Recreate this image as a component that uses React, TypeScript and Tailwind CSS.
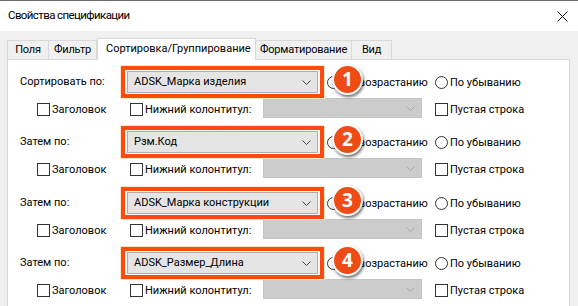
import React from 'react';

const font = { fontFamily: 'Roboto, "Noto Sans", sans-serif' };

const Chevron = ({ disabled }: { disabled?: boolean }) => (
  <svg width="9" height="5" viewBox="0 0 9 5" className="shrink-0">
    <path d="M0.5 0.5 L4.5 4.5 L8.5 0.5" fill="none" stroke={disabled ? '#a8a8a8' : '#444'} strokeWidth="1" />
  </svg>
);

const Checkbox = ({ label }: { label: string }) => (
  <div className="flex items-center gap-[2px] whitespace-nowrap">
    <div className="w-[13px] h-[13px] border border-[#333] bg-white shrink-0" />
    <span className="leading-none">{label}</span>
  </div>
);

const Radio = ({ label }: { label: string }) => (
  <div className="flex items-center gap-[2px] whitespace-nowrap">
    <div className="w-[13px] h-[13px] rounded-full border border-[#333] bg-white shrink-0" />
    <span className="leading-none">{label}</span>
  </div>
);

const Badge = ({ n }: { n: number }) => (
  <div className="absolute left-[312px] top-[-2px] w-[31px] h-[31px] rounded-full bg-[#ef4b14] border-2 border-white shadow-[1px_2px_3px_rgba(0,0,0,0.55)] flex items-center justify-center">
    <span className="text-white font-bold text-[19px] leading-none" style={{ fontFamily: '"Open Sans", "Noto Sans", sans-serif' }}>
      {n}
    </span>
  </div>
);

const sections = [
  { label: 'Сортировать по:', value: 'ADSK_Марка изделия', h: 'h-[60px]' },
  { label: 'Затем по:', value: 'Рзм.Код', h: 'h-[61px]' },
  { label: 'Затем по:', value: 'ADSK_Марка конструкции', h: 'h-[60px]' },
  { label: 'Затем по:', value: 'ADSK_Размер_Длина', h: 'h-[60px]' },
];

const tabs = [
  { t: 'Поля', w: 'w-[42px] border-l' },
  { t: 'Фильтр', w: 'w-[48px]' },
  { t: 'Сортировка/Группирование', w: 'w-[159px]' },
  { t: 'Форматирование', w: 'w-[96px]' },
  { t: 'Вид', w: 'w-[40px]' },
];

export default function App() {
  return (
    <div className="w-[578px] h-[306px] overflow-hidden bg-[#f0f0f0] text-[11px] text-black" style={font}>
      {/* Title bar */}
      <div className="h-[31px] bg-white border-t border-[#6e6e6e] flex items-center justify-between pl-[8px] pr-[10px]">
        <span className="text-[11.5px] tracking-[-0.6px] leading-none pb-[1px]">Свойства спецификации</span>
        <svg width="11" height="11" viewBox="0 0 11 11">
          <path d="M0.5 0.5 L10.5 10.5 M10.5 0.5 L0.5 10.5" stroke="#111" strokeWidth="1" />
        </svg>
      </div>

      {/* Tabs */}
      <div className="pl-[7px] pt-[6px] flex items-end h-[28px] whitespace-nowrap">
        {tabs.map((tab, i) =>
          i === 2 ? (
            <div
              key={tab.t}
              className={`${tab.w} h-[22px] -mb-[1px] bg-white border border-b-0 border-[#d9d9d9] pl-[8px] flex items-center relative z-10`}
            >
              {tab.t}
            </div>
          ) : (
            <div
              key={tab.t}
              className={`${tab.w} h-[19px] border-t border-r border-[#d9d9d9] flex items-center justify-center tracking-[-0.2px]`}
            >
              {tab.t}
            </div>
          )
        )}
      </div>

      {/* Panel */}
      <div className="ml-[7px] w-[563px] h-[260px] bg-white border border-[#d9d9d9] pl-[12px] pt-[6px]">
        {sections.map((s, i) => (
          <div key={i} className={`${s.h} flex flex-col`}>
            <div className="relative h-[32px] flex items-center">
              <div className="w-[101px] whitespace-nowrap">{s.label}</div>
              <div className="w-[203px] h-[32px] border-4 border-[#fe4a0e] shadow-[0_0_0_1px_#fde7c8] px-[2px] py-[1px]">
                <div className="h-[22px] bg-[#e5e5e5] border border-[#adadad] flex items-center justify-between pl-[6px] pr-[6px] whitespace-nowrap">
                  <span>{s.value}</span>
                  <Chevron />
                </div>
              </div>
              <div className="ml-[3px] w-[108px]">
                <Radio label="По возрастанию" />
              </div>
              <Radio label="По убыванию" />
              <Badge n={i + 1} />
            </div>
            <div className="h-[22px] flex items-start pl-[17px]">
              <div className="w-[93px] mt-[5px]">
                <Checkbox label="Заголовок" />
              </div>
              <div className="w-[133px] mt-[5px]">
                <Checkbox label="Нижний колонтитул:" />
              </div>
              <div className="w-[159px] h-[20px] bg-[#cccccc] border border-[#c4c4c4] flex items-center justify-end pr-[6px]">
                <Chevron disabled />
              </div>
              <div className="ml-[13px] mt-[5px]">
                <Checkbox label="Пустая строка" />
              </div>
            </div>
          </div>
        ))}
      </div>
    </div>
  );
}
